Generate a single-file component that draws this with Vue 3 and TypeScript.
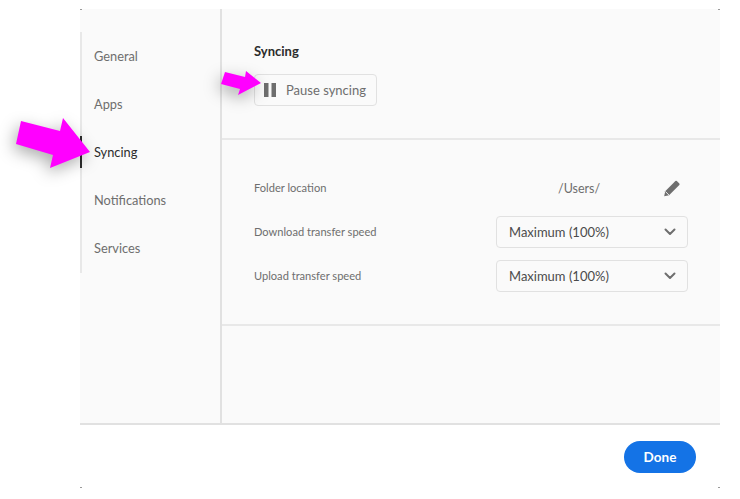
<script setup lang="ts">
const navItems = ['General', 'Apps', 'Syncing', 'Notifications', 'Services']
const activeItem = 'Syncing'
const speeds = ['Download transfer speed', 'Upload transfer speed']
</script>

<template>
  <div class="page">
    <div class="dialog">
      <i class="speck tl"></i><i class="speck tr"></i><i class="speck bl"></i><i class="speck br"></i>
      <div class="main">
        <nav class="nav">
          <div class="rail">
            <a v-for="item in navItems" :key="item" class="nav-item" :class="{ active: item === activeItem }">{{ item }}</a>
          </div>
        </nav>
        <section class="content">
          <div class="sec-top">
            <h2>Syncing</h2>
            <button class="pause">
              <svg width="12" height="14" viewBox="0 0 12 14"><rect x="0" y="0" width="4.500" height="14" fill="#6e6e6e"/><rect x="7.500" y="0" width="4.500" height="14" fill="#6e6e6e"/></svg>
              <span>Pause syncing</span>
            </button>
          </div>
          <div class="sec-settings">
            <div class="row">
              <span class="label">Folder location</span>
              <div class="folder">
                <span class="path">/Users/</span>
                <svg class="pencil" width="18" height="18" viewBox="0 0 18 18"><path d="M1.200 17.200l1-4.900L12.400 2.100a1 1 0 0 1 1.400 0l2.500 2.500a1 1 0 0 1 0 1.400L6.100 16.200z" fill="#6e6e6e"/><path d="M2.300 12.400l3.700 3.700" stroke="#fafafa" stroke-width=".9"/></svg>
              </div>
            </div>
            <div v-for="s in speeds" :key="s" class="row">
              <span class="label">{{ s }}</span>
              <div class="select">
                <span>Maximum (100%)</span>
                <svg width="12" height="8" viewBox="0 0 12 8"><path d="M1.500 1.500L6 6l4.500-4.500" fill="none" stroke="#6e6e6e" stroke-width="2" stroke-linecap="round" stroke-linejoin="round"/></svg>
              </div>
            </div>
          </div>
        </section>
      </div>
      <footer class="foot"><button class="done">Done</button></footer>
    </div>
    <svg class="arrows" width="740" height="499" viewBox="0 0 740 499">
      <g class="shadow" fill="#ff00ff">
        <polygon points="21,121 60,131 63,118 90,152 50,168 53,155 16,144"/>
        <polygon points="225,72 245,77 246,71 261,83 238,95 240,89 221,84"/>
      </g>
    </svg>
  </div>
</template>

<style>
html, body { margin: 0; background: #fff; }
</style>

<style scoped>
.page {
  position: relative;
  width: 740px;
  height: 499px;
  overflow: hidden;
  padding: 9px 20px 0 80px;
  box-sizing: border-box;
  font-family: Lato, "Open Sans", sans-serif;
  color: #4b4b4b;
}
.dialog { position: relative; width: 640px; height: 479px; display: flex; flex-direction: column; }
.speck { position: absolute; width: 2px; height: 1px; background: #9a9a9a; }
.tl { left: 0; top: 0; }
.tr { right: 0; top: 0; }
.bl { left: 0; bottom: 0; }
.br { right: 0; bottom: 0; }
.main {
  height: 414px;
  display: flex;
  background: #fafafa;
  border-bottom: 2px solid #e1e1e1;
}
.nav { width: 140px; border-right: 2px solid #e1e1e1; padding-top: 23px; }
.rail { border-left: 2px solid #e8e8e8; width: 138px; padding-bottom: 1px; }
.nav-item {
  display: block;
  height: 48px;
  line-height: 48px;
  margin-left: -2px;
  padding-left: 14px;
  font-size: 12.800px;
  color: #6e6e6e;
  position: relative;
}
.nav-item.active { color: #2c2c2c; }
.nav-item.active::before {
  content: "";
  position: absolute;
  left: 0;
  top: 8px;
  width: 2px;
  height: 32px;
  background: #2c2c2c;
}
.content { flex: 1; }
.sec-top { height: 131px; box-sizing: border-box; padding: 32px 0 0 32px; border-bottom: 2px solid #e8e8e8; }
h2 { margin: 0 0 13px; font-size: 13px; line-height: 20px; font-weight: 700; color: #2c2c2c; }
.pause {
  display: flex;
  align-items: center;
  width: 123px;
  height: 32px;
  padding: 0 0 0 9px;
  box-sizing: border-box;
  background: #fafafa;
  border: 1px solid #e1e1e1;
  border-radius: 4px;
  font: inherit;
  font-size: 13px;
  color: #6e6e6e;
}
.pause span { margin-left: 10px; }
.sec-settings {
  height: 186px;
  box-sizing: border-box;
  padding-top: 32px;
  border-bottom: 2px solid #e8e8e8;
  display: flex;
  flex-direction: column;
  gap: 12px;
}
.row { display: flex; align-items: center; justify-content: space-between; height: 32px; padding: 0 32px; }
.label { font-size: 11.100px; color: #6e6e6e; margin-top: -1px; }
.folder { width: 192px; display: flex; align-items: center; font-size: 12.500px; color: #6e6e6e; }
.path { margin-left: 62px; }
.pencil { margin-left: 63px; margin-top: -1px; }
.select {
  width: 192px;
  height: 32px;
  box-sizing: border-box;
  display: flex;
  align-items: center;
  justify-content: space-between;
  padding: 0 11px 0 12px;
  border: 1px solid #e1e1e1;
  border-radius: 4px;
  font-size: 13px;
  color: #4b4b4b;
}
.foot { flex: 1; display: flex; justify-content: flex-end; padding: 16px 24px 0 0; }
.done {
  width: 72px;
  height: 32px;
  border: 0;
  border-radius: 16px;
  background: #1473e6;
  color: #fff;
  font: inherit;
  font-size: 13.500px;
  font-weight: 700;
  padding: 0;
}
.arrows { position: absolute; left: 0; top: 0; pointer-events: none; }
.shadow { filter: drop-shadow(-3px 5px 8px rgba(0, 0, 0, 0.32)); }
</style>
